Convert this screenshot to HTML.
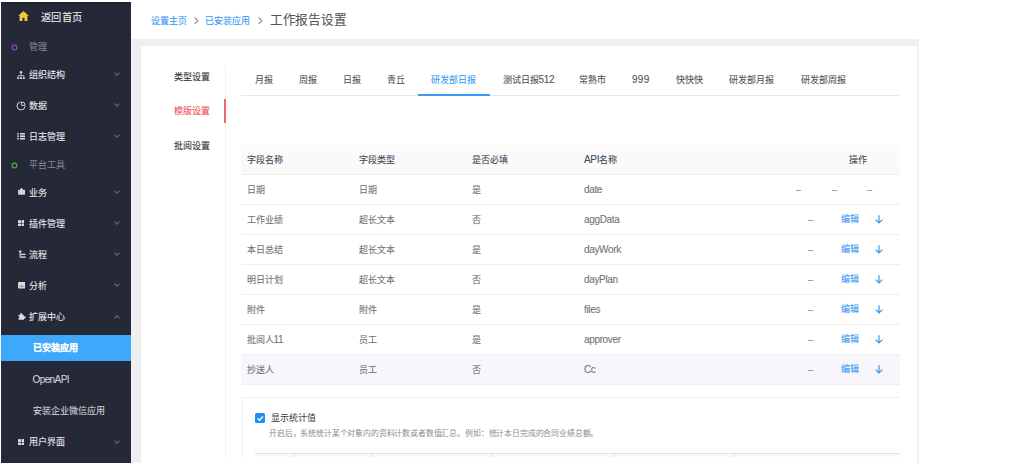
<!DOCTYPE html>
<html lang="zh-CN"><head><meta charset="utf-8">
<style>
*{margin:0;padding:0;box-sizing:border-box}
html,body{width:1024px;height:471px;overflow:hidden;background:#fff;font-family:"Liberation Sans",sans-serif;font-weight:500;-webkit-text-stroke:0.1px currentColor}
.a{position:absolute;white-space:nowrap}
#side{position:absolute;left:1px;top:2px;width:130px;height:461px;background:#252836;box-shadow:inset 0 1px 0 #1e2030;-webkit-text-stroke:0.08px currentColor}
#gray{position:absolute;left:131px;top:39px;width:788px;height:424px;background:#efefef}
#card{position:absolute;left:141px;top:46px;width:775.5px;height:417px;background:#fff}
.mi{position:absolute;left:0;width:130px;height:20px;line-height:20px;font-size:9px;color:#ebebef;font-weight:500}
.grp,.sub{font-weight:500}
.mi .t{position:absolute;left:27.5px}
.mi .ic{position:absolute;left:17px;top:6px;width:8px;height:8px}
.mi .chev{position:absolute;left:112.9px;top:7.6px;width:6px;height:4px}
.grp{color:#86878e}
.sub{color:#d2d2d7}
.sub .t{left:32.5px}
.bc{font-size:9px;color:#3c9cf2;top:10.5px;line-height:20px}
.tab{font-size:9px;color:#555;top:70px;line-height:20px}
.vt{font-size:9px;color:#333;left:174px;line-height:20px}
.th{font-size:9px;color:#464d5e;line-height:20px;font-weight:500}
.td{font-size:9px;color:#747474;line-height:20px}
.row{position:absolute;left:241px;width:659px;height:30px;border-bottom:1px solid #efefef}
.l{font-size:10px;letter-spacing:-0.35px}
.ed{font-size:9px;color:#3898f5;line-height:20px;font-weight:500}
</style></head><body>
<div id="side">
  <svg class="a" style="left:16.8px;top:9px;width:11px;height:10px" viewBox="0 0 11 10"><path d="M5.5 0.2 Q5.8 0.2 6 0.4 L10.8 4.8 L9.4 4.8 L9.4 9.9 L6.5 9.9 L6.5 6.8 L4.5 6.8 L4.5 9.9 L1.6 9.9 L1.6 4.8 L0.2 4.8 L5 0.4 Q5.2 0.2 5.5 0.2 Z" fill="#f3c944"/></svg>
  <div class="a" style="left:40px;top:6px;font-size:10px;transform:scale(1.025);transform-origin:0 50%;line-height:20px;color:#eeeef0">返回首页</div>
  <svg class="a" style="left:9.5px;top:41.5px;width:7px;height:7px" viewBox="0 0 7 7"><circle cx="3.5" cy="3.5" r="2.4" fill="none" stroke="#9b42d2" stroke-width="1.1"/></svg>
  <div class="mi grp" style="top:34.5px"><span class="t">管理</span></div>

  <div class="mi" style="top:62.5px"><svg class="ic" style="left:16.4px;top:6px;width:8px;height:8.5px" viewBox="0 0 8 8.5"><circle cx="4" cy="1.3" r="1.25" fill="#ddd"/><path d="M4 2.3V4.6M1.2 6.2V4.6H6.8V6.2M4 4.6V6.2" stroke="#ccc" stroke-width="0.8" fill="none"/><rect x="0.2" y="6.3" width="2" height="2" fill="#ddd"/><rect x="3" y="6.3" width="2" height="2" fill="#ddd"/><rect x="5.8" y="6.3" width="2" height="2" fill="#ddd"/></svg><span class="t">组织结构</span><svg class="chev" viewBox="0 0 6 4"><path d="M0.5 0.6 L3 3.2 L5.5 0.6" stroke="#686a73" stroke-width="1.1" fill="none"/></svg></div>

  <div class="mi" style="top:93.5px"><svg class="ic" style="left:15.1px;top:5.1px;width:10px;height:10px" viewBox="0 0 10 10"><path d="M4.6 1 A4 4 0 1 0 9 5.4" stroke="#ddd" stroke-width="0.95" fill="none"/><path d="M5.6 0.9 V4.4 H9.1 A3.5 3.5 0 0 0 5.6 0.9 Z" stroke="#ddd" stroke-width="0.9" fill="none"/></svg><span class="t">数据</span><svg class="chev" viewBox="0 0 6 4"><path d="M0.5 0.6 L3 3.2 L5.5 0.6" stroke="#686a73" stroke-width="1.1" fill="none"/></svg></div>

  <div class="mi" style="top:124.5px"><svg class="ic" style="left:15.9px;top:6.9px;width:8.3px;height:6.6px" viewBox="0 0 8.3 6.6"><rect x="0" y="0" width="2" height="1.5" fill="#b4b4b8"/><rect x="3" y="0" width="5.3" height="1.5" fill="#dcdcde"/><rect x="0" y="2.4" width="2" height="1.6" fill="#b4b4b8"/><rect x="3" y="2.4" width="5.3" height="1.6" fill="#dcdcde"/><rect x="0" y="4.8" width="2" height="1.8" fill="#b4b4b8"/><rect x="3" y="4.8" width="5.3" height="1.8" fill="#d4d4d6"/></svg><span class="t">日志管理</span><svg class="chev" viewBox="0 0 6 4"><path d="M0.5 0.6 L3 3.2 L5.5 0.6" stroke="#686a73" stroke-width="1.1" fill="none"/></svg></div>

  <svg class="a" style="left:9.5px;top:159.5px;width:7px;height:7px" viewBox="0 0 7 7"><circle cx="3.5" cy="3.5" r="2.4" fill="none" stroke="#3dbb3d" stroke-width="1.1"/></svg>
  <div class="mi grp" style="top:152.5px"><span class="t">平台工具</span></div>

  <div class="mi" style="top:180.5px"><svg class="ic" style="left:16.9px;top:5.8px;width:7.2px;height:7px" viewBox="0 0 7.2 7"><rect x="0" y="1.9" width="2.2" height="4.8" fill="#c8c8ca"/><rect x="4.9" y="1.9" width="2.2" height="4.8" fill="#d4d4d6"/><path d="M2.1 6.7 V1.3 Q2.1 0.2 3.5 0.2 Q4.9 0.2 4.9 1.3 V6.7 Z" fill="#e2e2e4"/></svg><span class="t">业务</span><svg class="chev" viewBox="0 0 6 4"><path d="M0.5 0.6 L3 3.2 L5.5 0.6" stroke="#686a73" stroke-width="1.1" fill="none"/></svg></div>

  <div class="mi" style="top:211.5px"><svg class="ic" style="left:16.9px;top:6.5px;width:6.6px;height:6.4px" viewBox="0 0 6.6 6.4"><rect x="0" y="0" width="3" height="2.95" rx="0.5" fill="#dadadc"/><rect x="3.6" y="0" width="3" height="2.95" rx="0.5" fill="#dadadc"/><rect x="0" y="3.45" width="3" height="2.95" rx="0.5" fill="#dadadc"/><rect x="3.6" y="3.45" width="3" height="2.95" rx="0.5" fill="#dadadc"/></svg><span class="t">插件管理</span><svg class="chev" viewBox="0 0 6 4"><path d="M0.5 0.6 L3 3.2 L5.5 0.6" stroke="#686a73" stroke-width="1.1" fill="none"/></svg></div>

  <div class="mi" style="top:242.5px"><svg class="ic" style="left:16.9px;top:5.9px;width:8px;height:8px" viewBox="0 0 8 8"><path d="M0.5 0.9 Q2.2 0.2 3.9 0.9 L2.9 2.4 H1.5 Z" fill="#dedee0"/><rect x="1.6" y="2" width="1.2" height="5.8" fill="#cfcfd2"/><rect x="2.9" y="3.7" width="4.7" height="1.3" fill="#d6d6d8"/><rect x="2.9" y="6.4" width="4.7" height="1.4" fill="#dedee0"/></svg><span class="t">流程</span><svg class="chev" viewBox="0 0 6 4"><path d="M0.5 0.6 L3 3.2 L5.5 0.6" stroke="#686a73" stroke-width="1.1" fill="none"/></svg></div>

  <div class="mi" style="top:273.5px"><svg class="ic" style="left:16.8px;top:6.8px;width:7.2px;height:6.6px" viewBox="0 0 7.3 6.8"><rect x="0" y="0" width="7.3" height="6.8" rx="0.5" fill="#dcdcdc"/><path d="M1.2 5.3 V4.6 L2.8 3.6 L3.6 2.4 L4.6 3.4 L5.9 4.6 V5.3 Z" fill="#a0a0a4"/></svg><span class="t">分析</span><svg class="chev" viewBox="0 0 6 4"><path d="M0.5 0.6 L3 3.2 L5.5 0.6" stroke="#686a73" stroke-width="1.1" fill="none"/></svg></div>

  <div class="mi" style="top:305px"><svg class="ic" style="left:17px;top:6px;width:8px;height:7.4px" viewBox="0 0 8 7.4"><rect x="0.5" y="2" width="5.5" height="4.7" rx="0.4" fill="#dedede"/><circle cx="3.2" cy="1.5" r="1.3" fill="#dedede"/><circle cx="6.6" cy="4.4" r="1.1" fill="#dedede"/><circle cx="0.5" cy="4.2" r="0.9" fill="#252836"/></svg><span class="t">扩展中心</span><svg class="chev" viewBox="0 0 6 4"><path d="M0.5 3.4 L3 0.8 L5.5 3.4" stroke="#686a73" stroke-width="1.1" fill="none"/></svg></div>

  <div style="position:absolute;left:0;top:333px;width:130px;height:26px;background:#3ea9fb"></div>
  <div class="mi" style="top:336px;color:#fff;font-weight:bold"><span class="t" style="left:31.5px">已安装应用</span></div>
  <div class="mi sub" style="top:367.5px"><span class="t" style="left:31.5px"><span class="l" style="letter-spacing:-0.6px">OpenAPI</span></span></div>
  <div class="mi sub" style="top:399px"><span class="t" style="left:31.5px">安装企业微信应用</span></div>
  <div class="mi" style="top:430px"><svg class="ic" style="left:16.9px;top:6.5px;width:6.6px;height:6.4px" viewBox="0 0 6.6 6.4"><rect x="0" y="0" width="3" height="2.95" rx="0.5" fill="#dadadc"/><rect x="3.6" y="0" width="3" height="2.95" rx="0.5" fill="#dadadc"/><rect x="0" y="3.45" width="3" height="2.95" rx="0.5" fill="#dadadc"/><rect x="3.6" y="3.45" width="3" height="2.95" rx="0.5" fill="#dadadc"/></svg><span class="t">用户界面</span><svg class="chev" viewBox="0 0 6 4"><path d="M0.5 0.6 L3 3.2 L5.5 0.6" stroke="#686a73" stroke-width="1.1" fill="none"/></svg></div>
</div>

<div class="a bc" style="left:150.5px">设置主页</div>
<svg class="a" style="left:193.5px;top:16.8px;width:5px;height:7.5px" viewBox="0 0 5 7.5"><path d="M0.7 0.7 L3.8 3.75 L0.7 6.8" stroke="#7a7a7a" stroke-width="1.05" fill="none"/></svg>
<div class="a bc" style="left:204.5px">已安装应用</div>
<svg class="a" style="left:257.5px;top:16.8px;width:5px;height:7.5px" viewBox="0 0 5 7.5"><path d="M0.7 0.7 L3.8 3.75 L0.7 6.8" stroke="#7a7a7a" stroke-width="1.05" fill="none"/></svg>
<div class="a" style="left:270px;top:9.5px;font-size:13px;transform:scale(0.977);transform-origin:0 50%;line-height:20px;color:#565656;font-weight:400">工作报告设置</div>

<div id="gray"></div>
<div id="card"></div>

<!-- vertical tabs -->
<div class="a" style="left:225px;top:65px;width:1px;height:392px;background:#efefef"></div>
<div class="a" style="left:224px;top:99px;width:2px;height:24px;background:#f4646c"></div>
<div class="a vt" style="top:67px">类型设置</div>
<div class="a vt" style="top:101px;color:#f2535c">模版设置</div>
<div class="a vt" style="top:135.5px">批阅设置</div>

<!-- tabs -->
<div class="a" style="left:241px;top:95px;width:658px;height:1px;background:#e8e8e8"></div>
<div class="a" style="left:418px;top:94.2px;width:72px;height:1.7px;background:#3b9cf6"></div>
<div class="a tab" style="left:254.5px">月报</div>
<div class="a tab" style="left:298.5px">周报</div>
<div class="a tab" style="left:342.5px">日报</div>
<div class="a tab" style="left:386.5px">青丘</div>
<div class="a tab" style="left:431px;color:#3b9cf6">研发部日报</div>
<div class="a tab" style="left:502.5px">测试日报<span class="l">512</span></div>
<div class="a tab" style="left:579px">常熟市</div>
<div class="a tab" style="left:632px"><span class="l" style="letter-spacing:0.3px">999</span></div>
<div class="a tab" style="left:675.5px">快快快</div>
<div class="a tab" style="left:729px">研发部月报</div>
<div class="a tab" style="left:800.5px">研发部周报</div>

<!-- table -->
<div class="a" style="left:241px;top:145px;width:659px;height:29.5px;background:#fafafa;border-bottom:1px solid #efefef"></div>
<div class="a th" style="left:246.5px;top:149.5px">字段名称</div>
<div class="a th" style="left:359px;top:149.5px">字段类型</div>
<div class="a th" style="left:472px;top:149.5px">是否必填</div>
<div class="a th" style="left:584px;top:149.5px"><span class="l">API</span>名称</div>
<div class="a th" style="left:849px;top:149.5px">操作</div>

<div class="row" style="top:174.5px"></div>
<div class="row" style="top:204.5px"></div>
<div class="row" style="top:234.5px"></div>
<div class="row" style="top:264.5px"></div>
<div class="row" style="top:294.5px"></div>
<div class="row" style="top:324.5px"></div>
<div class="row" style="top:354.5px;background:#f7f7fb"></div>

<div class="a td" style="left:246.5px;top:179.5px">日期</div><div class="a td" style="left:359px;top:179.5px">日期</div><div class="a td" style="left:472px;top:179.5px">是</div><div class="a td" style="left:584px;top:179.5px"><span class="l">date</span></div>
<div class="a td" style="left:796px;top:179.5px">–</div><div class="a td" style="left:832px;top:179.5px">–</div><div class="a td" style="left:867px;top:179.5px">–</div>

<div class="a td" style="left:246.5px;top:209.5px">工作业绩</div><div class="a td" style="left:359px;top:209.5px">超长文本</div><div class="a td" style="left:472px;top:209.5px">否</div><div class="a td" style="left:584px;top:209.5px"><span class="l">aggData</span></div>
<div class="a td" style="left:808px;top:209.5px">–</div><div class="a ed" style="left:840.5px;top:208.5px">编辑</div>
<div class="a td" style="left:246.5px;top:239.5px">本日总结</div><div class="a td" style="left:359px;top:239.5px">超长文本</div><div class="a td" style="left:472px;top:239.5px">是</div><div class="a td" style="left:584px;top:239.5px"><span class="l">dayWork</span></div>
<div class="a td" style="left:808px;top:239.5px">–</div><div class="a ed" style="left:840.5px;top:238.5px">编辑</div>
<div class="a td" style="left:246.5px;top:269.5px">明日计划</div><div class="a td" style="left:359px;top:269.5px">超长文本</div><div class="a td" style="left:472px;top:269.5px">否</div><div class="a td" style="left:584px;top:269.5px"><span class="l">dayPlan</span></div>
<div class="a td" style="left:808px;top:269.5px">–</div><div class="a ed" style="left:840.5px;top:268.5px">编辑</div>
<div class="a td" style="left:246.5px;top:299.5px">附件</div><div class="a td" style="left:359px;top:299.5px">附件</div><div class="a td" style="left:472px;top:299.5px">是</div><div class="a td" style="left:584px;top:299.5px"><span class="l">files</span></div>
<div class="a td" style="left:808px;top:299.5px">–</div><div class="a ed" style="left:840.5px;top:298.5px">编辑</div>
<div class="a td" style="left:246.5px;top:329.5px">批阅人<span class="l">11</span></div><div class="a td" style="left:359px;top:329.5px">员工</div><div class="a td" style="left:472px;top:329.5px">是</div><div class="a td" style="left:584px;top:329.5px"><span class="l">approver</span></div>
<div class="a td" style="left:808px;top:329.5px">–</div><div class="a ed" style="left:840.5px;top:328.5px">编辑</div>
<div class="a td" style="left:246.5px;top:359.5px">抄送人</div><div class="a td" style="left:359px;top:359.5px">员工</div><div class="a td" style="left:472px;top:359.5px">否</div><div class="a td" style="left:584px;top:359.5px"><span class="l">Cc</span></div>
<div class="a td" style="left:808px;top:359.5px">–</div><div class="a ed" style="left:840.5px;top:358.5px">编辑</div>

<svg class="a" style="left:874.8px;top:215px;width:8px;height:9px" viewBox="0 0 8 9"><path d="M4 0.3V8M0.6 4.6L4 8L7.4 4.6" stroke="#3898f5" stroke-width="1.2" fill="none"/></svg>
<svg class="a" style="left:874.8px;top:245px;width:8px;height:9px" viewBox="0 0 8 9"><path d="M4 0.3V8M0.6 4.6L4 8L7.4 4.6" stroke="#3898f5" stroke-width="1.2" fill="none"/></svg>
<svg class="a" style="left:874.8px;top:275px;width:8px;height:9px" viewBox="0 0 8 9"><path d="M4 0.3V8M0.6 4.6L4 8L7.4 4.6" stroke="#3898f5" stroke-width="1.2" fill="none"/></svg>
<svg class="a" style="left:874.8px;top:305px;width:8px;height:9px" viewBox="0 0 8 9"><path d="M4 0.3V8M0.6 4.6L4 8L7.4 4.6" stroke="#3898f5" stroke-width="1.2" fill="none"/></svg>
<svg class="a" style="left:874.8px;top:335px;width:8px;height:9px" viewBox="0 0 8 9"><path d="M4 0.3V8M0.6 4.6L4 8L7.4 4.6" stroke="#3898f5" stroke-width="1.2" fill="none"/></svg>
<svg class="a" style="left:874.8px;top:365px;width:8px;height:9px" viewBox="0 0 8 9"><path d="M4 0.3V8M0.6 4.6L4 8L7.4 4.6" stroke="#3898f5" stroke-width="1.2" fill="none"/></svg>

<!-- stats box -->
<div class="a" style="left:241.5px;top:397px;width:658.5px;height:60px;border-top:1px solid #efefef;border-left:1px solid #efefef"></div>
<div class="a" style="left:254.5px;top:412.5px;width:10.5px;height:10.5px;background:#1f8ff5;border-radius:1.5px"></div>
<svg class="a" style="left:254.5px;top:412.5px;width:10.5px;height:10.5px" viewBox="0 0 10.5 10.5"><path d="M2.6 5.3L4.5 7.2L8 3.5" stroke="#fff" stroke-width="1.3" fill="none"/></svg>
<div class="a" style="left:270.5px;top:408px;font-size:9px;line-height:20px;color:#383838;font-weight:400;-webkit-text-stroke:0">显示统计值</div>
<div class="a" style="left:269px;top:423.5px;font-size:8px;transform:scale(0.98);transform-origin:0 50%;line-height:20px;color:#8c8c8c;font-weight:400;-webkit-text-stroke:0">开启后，系统统计某个对象内的资料计数或者数值汇总。例如：统计本日完成的合同业绩总额。</div>
<div class="a" style="left:255px;top:453px;width:645px;height:4px;border-top:1px solid #e0e0e0;background:#fafafa"></div>
<div class="a" style="left:294px;top:453px;width:1px;height:4px;background:#e0e0e0"></div>
<div class="a" style="left:372px;top:453px;width:1px;height:4px;background:#e0e0e0"></div>
<div class="a" style="left:492px;top:453px;width:1px;height:4px;background:#e0e0e0"></div>
<div class="a" style="left:614px;top:453px;width:1px;height:4px;background:#e0e0e0"></div>
<div class="a" style="left:734px;top:453px;width:1px;height:4px;background:#e0e0e0"></div>
</body></html>
